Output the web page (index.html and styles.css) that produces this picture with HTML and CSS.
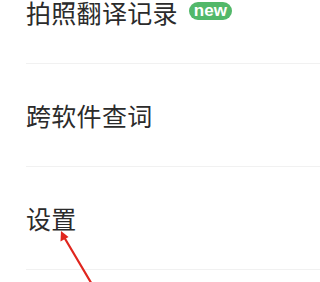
FILE: index.html
```html
<!DOCTYPE html>
<html lang="zh">
<head>
<meta charset="utf-8">
<link rel="stylesheet" href="styles.css">
</head>
<body>
<div class="list">
  <div class="item"><span class="label">拍照翻译记录</span><span class="badge">new</span></div>
  <div class="item"><span class="label">跨软件查词</span></div>
  <div class="item"><span class="label">设置</span></div>
  <div class="item"></div>
</div>
<svg class="arrow" width="320" height="282" viewBox="0 0 320 282">
  <line x1="93" y1="286" x2="64" y2="237" stroke="#e0261e" stroke-width="2.2" stroke-linecap="round"/>
  <polygon points="61,231 60.5,241.5 68.5,237" fill="#e0261e"/>
</svg>
</body>
</html>
```
FILE: styles.css
```css
html, body {
  margin: 0;
  padding: 0;
  background: #ffffff;
  overflow: hidden;
  width: 320px;
  height: 282px;
  position: relative;
}
.list {
  margin-top: -39px;
  padding-left: 26px;
  font-family: "Noto Sans CJK SC", "Noto Sans", sans-serif;
}
.item {
  height: 102px;
  border-bottom: 1px solid #f1f1f1;
  display: flex;
  align-items: center;
  gap: 10px;
}
.label {
  font-size: 25px;
  color: #2b2b2b;
  line-height: 1;
  letter-spacing: 0.3px;
}
.badge {
  background: #52b86a;
  color: #ffffff;
  font-family: "Liberation Sans", Arial, sans-serif;
  font-weight: bold;
  font-size: 17px;
  line-height: 17px;
  padding: 0 5px 1px;
  border-radius: 9px;
  margin-left: 1px;
  margin-bottom: 2px;
}
.arrow {
  position: absolute;
  left: 0;
  top: 0;
}
```
